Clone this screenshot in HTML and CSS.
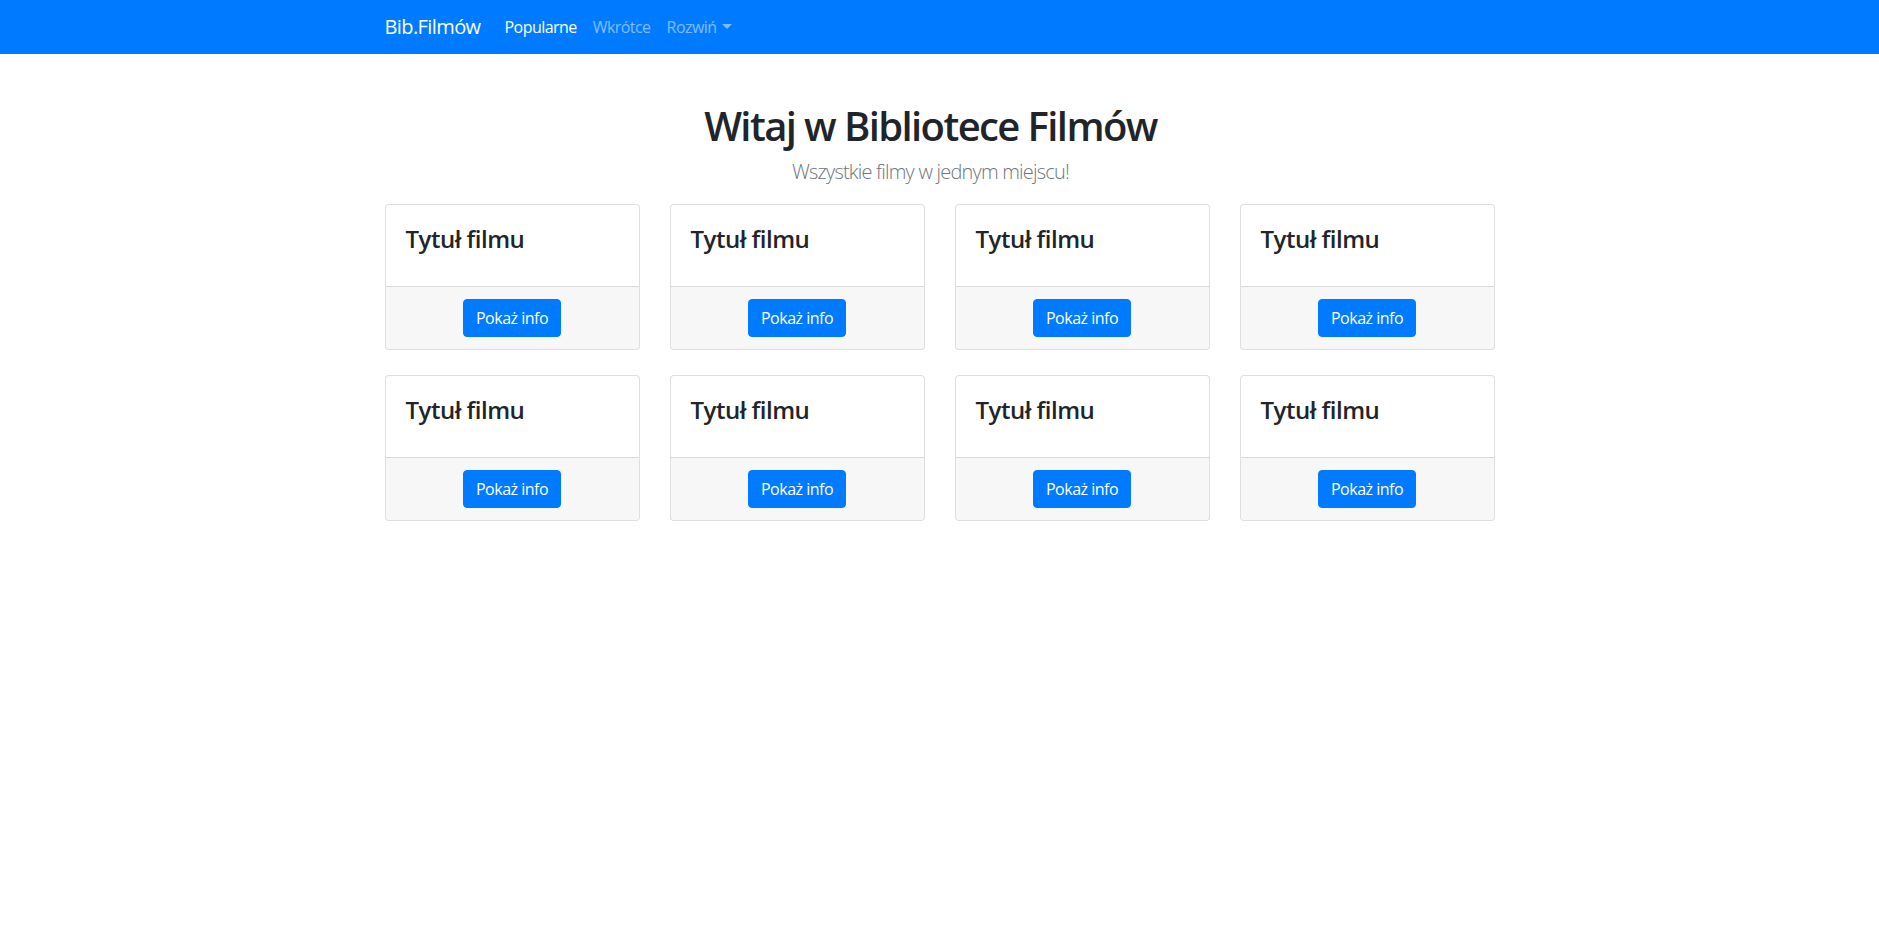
FILE: index.html
```html
<!DOCTYPE html>
<html lang="pl">
<head>
<meta charset="utf-8">
<title>Bib.Filmów</title>
<link rel="stylesheet" href="styles.css">
</head>
<body>
<nav class="navbar">
  <div class="navbar-inner">
    <a class="brand" href="#">Bib.Filmów</a>
    <ul class="nav">
      <li><a class="nav-link active" href="#">Popularne</a></li>
      <li><a class="nav-link" href="#">Wkrótce</a></li>
      <li><a class="nav-link dropdown" href="#">Rozwiń<span class="caret"></span></a></li>
    </ul>
  </div>
</nav>
<main class="container">
  <header class="intro">
    <h1 class="title">Witaj w Bibliotece Filmów</h1>
    <p class="lead">Wszystkie filmy w jednym miejscu!</p>
  </header>
  <section class="grid">
    <div class="card"><div class="card-body"><h4 class="card-title">Tytuł filmu</h4></div><div class="card-footer"><button class="btn">Pokaż info</button></div></div>
    <div class="card"><div class="card-body"><h4 class="card-title">Tytuł filmu</h4></div><div class="card-footer"><button class="btn">Pokaż info</button></div></div>
    <div class="card"><div class="card-body"><h4 class="card-title">Tytuł filmu</h4></div><div class="card-footer"><button class="btn">Pokaż info</button></div></div>
    <div class="card"><div class="card-body"><h4 class="card-title">Tytuł filmu</h4></div><div class="card-footer"><button class="btn">Pokaż info</button></div></div>
    <div class="card"><div class="card-body"><h4 class="card-title">Tytuł filmu</h4></div><div class="card-footer"><button class="btn">Pokaż info</button></div></div>
    <div class="card"><div class="card-body"><h4 class="card-title">Tytuł filmu</h4></div><div class="card-footer"><button class="btn">Pokaż info</button></div></div>
    <div class="card"><div class="card-body"><h4 class="card-title">Tytuł filmu</h4></div><div class="card-footer"><button class="btn">Pokaż info</button></div></div>
    <div class="card"><div class="card-body"><h4 class="card-title">Tytuł filmu</h4></div><div class="card-footer"><button class="btn">Pokaż info</button></div></div>
  </section>
</main>
</body>
</html>
```
FILE: styles.css
```css
* { box-sizing: border-box; }
body {
  margin: 0;
  font-family: "Open Sans", "Noto Sans", "Liberation Sans", sans-serif;
  font-size: 16px;
  line-height: 1.5;
  color: #212529;
  background: #fff;
}
.navbar {
  background: #007bff;
  height: 54px;
}
.navbar-inner {
  width: 1110px;
  height: 100%;
  margin: 0 auto;
  display: flex;
  align-items: center;
}
.brand {
  color: #fff;
  font-size: 20px;
  line-height: 30px;
  text-decoration: none;
  margin-right: 16px;
  letter-spacing: -0.59px;
}
.nav {
  list-style: none;
  margin: 0;
  padding: 0;
  display: flex;
}
.nav-link {
  display: block;
  padding: 8px;
  color: rgba(255,255,255,.5);
  text-decoration: none;
  font-size: 16px;
  line-height: 24px;
  letter-spacing: -0.55px;
}
.nav-link.active { color: #fff; }
.caret {
  display: inline-block;
  margin-left: 5px;
  vertical-align: 4px;
  border-top: 5px solid rgba(255,255,255,.5);
  border-left: 5px solid transparent;
  border-right: 5px solid transparent;
}
.container {
  width: 1110px;
  margin: 0 auto;
}
.intro {
  text-align: center;
  padding-top: 48px;
  padding-right: 18px;
}
.title {
  margin: 0 0 7px;
  font-size: 40px;
  line-height: 48px;
  font-weight: 600;
  letter-spacing: -1.6px;
}
.lead {
  margin: 0 0 17px;
  font-size: 20px;
  line-height: 30px;
  font-weight: 300;
  color: #6c757d;
  letter-spacing: -0.79px;
}
.grid {
  display: grid;
  grid-template-columns: repeat(4, 255px);
  column-gap: 30px;
  row-gap: 25px;
}
.card {
  border: 1px solid rgba(0,0,0,.125);
  border-radius: 4px;
  overflow: hidden;
  background: #fff;
}
.card-body { padding: 20px; }
.card-title {
  margin: 0 0 12px;
  font-size: 24px;
  line-height: 28.8px;
  font-weight: 600;
  letter-spacing: -0.5px;
}
.card-footer {
  background: rgba(0,0,0,.03);
  border-top: 1px solid rgba(0,0,0,.125);
  padding: 12px 20px;
  text-align: center;
}
.btn {
  font-family: inherit;
  font-size: 16px;
  line-height: 24px;
  padding: 6px 12px;
  color: #fff;
  background: #007bff;
  border: 1px solid #007bff;
  border-radius: 4px;
  letter-spacing: -0.5px;
  cursor: pointer;
}
```
